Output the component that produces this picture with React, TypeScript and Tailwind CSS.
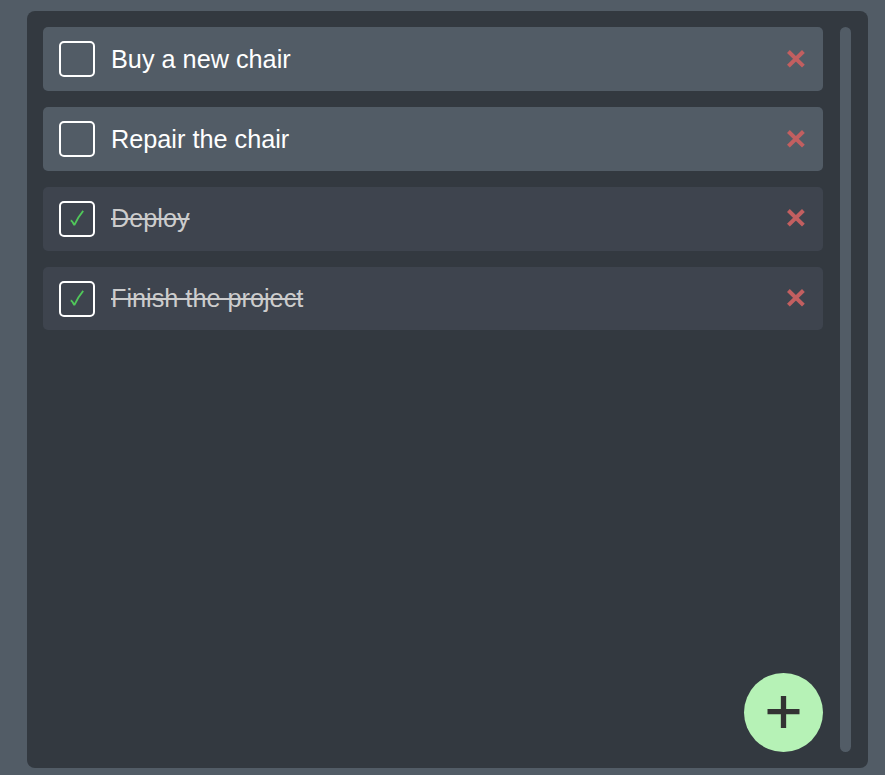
const tasks = [
  { id: 1, title: "Buy a new chair", done: false },
  { id: 2, title: "Repair the chair", done: false },
  { id: 3, title: "Deploy", done: true },
  { id: 4, title: "Finish the project", done: true },
];

function Task({ title, done }: { title: string; done: boolean }) {
  return (
    <li
      className={`flex h-16 items-center rounded-[5px] pr-[17px] pl-4 last:h-[63px] last:pt-px ${
        done ? "bg-[#3e444e]" : "bg-[#525c66]"
      }`}
    >
      <button
        aria-label="Toggle task"
        className="-mt-px flex size-9 shrink-0 items-center justify-center rounded-[5px] border-2 border-white"
      >
        {done && (
          <svg width="16" height="18" viewBox="0 0 16 18" fill="none" stroke="#50c75a">
            <path d="M1.7 10.5 Q3.2 10.7 5.3 15.2 Q9 7 14.2 0.9" strokeWidth="1.8" strokeLinejoin="bevel" />
          </svg>
        )}
      </button>
      <span
        className={`ml-4 grow text-[25.25px] leading-8 ${
          done ? "-mt-0.5 text-[#cccccc] line-through decoration-2" : "text-white"
        }`}
      >
        {title}
      </span>
      <button aria-label="Delete task" className={done ? "-mt-[3px]" : "-mt-px"}>
        <svg className="block" width="20" height="18" viewBox="0 0 20 18" stroke="#c25f60">
          <path d="M2.4 1.5 L17.4 16.1 M17.4 1.5 L2.4 16.1" strokeWidth="4" />
        </svg>
      </button>
    </li>
  );
}

export default function App() {
  return (
    <main className="h-[775px] w-[885px] bg-[#525c66] pt-[11px] pl-[27px] font-['Liberation_Sans',Arial,sans-serif]">
      <section className="relative flex h-[757px] w-[841px] justify-between rounded-[8px] bg-[#333940] py-4 pr-[17px] pl-4">
        <ul className="flex w-[780px] flex-col gap-4">
          {tasks.map((task) => (
            <Task key={task.id} title={task.title} done={task.done} />
          ))}
        </ul>
        <div className="w-[11px] rounded-full bg-[#525c66]" />
        <button
          aria-label="Add task"
          className="absolute right-[45px] bottom-4 flex size-[79px] items-center justify-center rounded-full bg-[#b6f2b6]"
        >
          <svg width="33" height="33" viewBox="0 0 33 33" stroke="#333333" strokeWidth="5.3">
            <path d="M0.5 15.7 H32.5 M16.5 0 V32" />
          </svg>
        </button>
      </section>
    </main>
  );
}
